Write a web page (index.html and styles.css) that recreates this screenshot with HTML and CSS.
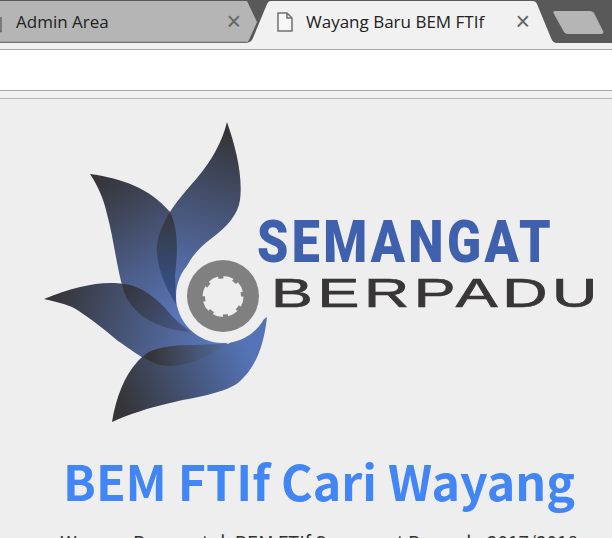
FILE: index.html
```html
<!DOCTYPE html>
<html lang="id">
<head>
    <meta charset="UTF-8">
    <title>Wayang Baru BEM FTIf</title>
    <link rel="stylesheet" href="styles.css">
</head>
<body>
    <div class="tabstrip">
        <svg class="tabshapes" width="612" height="43" viewBox="0 0 612 43">
            <path d="M0 1H247L257 22L248 42H0Z" fill="#b5b5b5"/>
            <path d="M0 42H248" stroke="#8b8b8b" fill="none"/>
            <path d="M1 17V31.5H0" stroke="#666" stroke-width="1.5" fill="none"/>
            <path d="M247 43C251 42 252 40 253 38L267 4C268 2 269 1 271 1H532C535 1 536 2 537 4L551 38C552 41 554 43 557 43Z" fill="#f1f1f1"/>
            <path d="M555 11H590C592 11 593 12 594 13L603 31C604 33 603 34 601 34H568C566 34 565 33 564 32L554 14C553 12 553 11 555 11Z" fill="#b5b5b5"/>
        </svg>
        <div class="tab tab-back">
            <span class="tab-title">Admin Area</span>
            <span class="tab-close">×</span>
        </div>
        <div class="tab tab-active">
            <svg class="tab-icon" width="16" height="20" viewBox="0 0 16 20">
                <path d="M1 1H10L15 6V19H1Z M10 1V6H15" fill="#f8f8f8" stroke="#707070" stroke-width="1.5"/>
            </svg>
            <span class="tab-title">Wayang Baru BEM FTIf</span>
            <span class="tab-close">×</span>
        </div>
    </div>
    <div class="toolbar"></div>
    <div class="addressbar"></div>
    <div class="bookmarks"></div>

    <div class="page">
        <svg class="logo" width="612" height="330" viewBox="0 99 612 330">
            <defs>
                <linearGradient id="leafA" gradientUnits="userSpaceOnUse" x1="227" y1="130" x2="180" y2="300">
                    <stop offset="0" stop-color="#353436"/>
                    <stop offset="1" stop-color="#5a78bd"/>
                </linearGradient>
                <linearGradient id="leafB" gradientUnits="userSpaceOnUse" x1="95" y1="178" x2="180" y2="320">
                    <stop offset="0" stop-color="#353436"/>
                    <stop offset="1" stop-color="#5a78bd"/>
                </linearGradient>
                <linearGradient id="leafC" gradientUnits="userSpaceOnUse" x1="50" y1="295" x2="215" y2="345">
                    <stop offset="0" stop-color="#353436"/>
                    <stop offset="1" stop-color="#5a78bd"/>
                </linearGradient>
                <linearGradient id="leafD" gradientUnits="userSpaceOnUse" x1="120" y1="405" x2="250" y2="350">
                    <stop offset="0" stop-color="#353436"/>
                    <stop offset="1" stop-color="#5574b8"/>
                </linearGradient>
                <linearGradient id="lensA" gradientUnits="userSpaceOnUse" x1="170" y1="215" x2="172" y2="300">
                    <stop offset="0" stop-color="#37393f"/>
                    <stop offset="1" stop-color="#34528f"/>
                </linearGradient>
                <linearGradient id="lensB" gradientUnits="userSpaceOnUse" x1="125" y1="290" x2="190" y2="332">
                    <stop offset="0" stop-color="#35373f"/>
                    <stop offset="1" stop-color="#46598a"/>
                </linearGradient>
                <linearGradient id="lensC" gradientUnits="userSpaceOnUse" x1="150" y1="355" x2="225" y2="345">
                    <stop offset="0" stop-color="#353538"/>
                    <stop offset="1" stop-color="#52699c"/>
                </linearGradient>
            </defs>
            <path d="M227 122C222 142 212 160 197 178C185 192 176 202 170 212C160 228 156 242 157 252C158 272 168 292 177 306L200 300L182 280C186 262 198 248 212 238C228 226 238 214 240 200C243 176 236 148 227 122Z" fill="url(#leafA)"/>
            <path d="M90 174C120 178 150 188 170 212C178 228 178 250 175 275L176 304L195 335C165 332 135 320 124 292C117 270 114 240 107 214C104 200 98 186 90 174Z" fill="url(#leafB)"/>
            <path d="M44 299C70 288 95 282 115 283C135 284 150 292 165 308C173 318 182 326 195 333L228 343C210 355 190 366 170 366C150 366 135 352 118 341C100 326 85 314 72 307C62 303 52 301 44 299Z" fill="url(#leafC)"/>
            <path d="M112 422C116 398 124 376 138 361C150 348 170 345 195 345L228 344L267 317C264 345 256 368 238 383C222 394 195 397 170 403C148 408 130 414 112 422Z" fill="url(#leafD)"/>
            <path d="M170 212C178 228 178 250 175 275L176 304C168 292 158 272 157 252C156 242 160 228 170 212Z" fill="url(#lensA)"/>
            <path d="M122 284C135 284 150 292 165 308C173 318 182 326 190 332C165 330 135 320 124 292Z" fill="url(#lensB)"/>
            <path d="M143 357C150 348 170 345 195 345L228 344C210 355 190 366 170 366C160 366 150 362 143 357Z" fill="url(#lensC)"/>
            <circle cx="223" cy="296" r="47" fill="#eeeeee"/>
            <circle cx="223" cy="296" r="36" fill="#808080"/>
            <circle cx="223" cy="296.5" r="18" fill="#eeeeee"/>
            <circle cx="223" cy="296.5" r="18.5" fill="none" stroke="#eeeeee" stroke-width="4" stroke-dasharray="9.5 5"/>
            <text class="logo-top" x="257" y="261.5" textLength="297" lengthAdjust="spacingAndGlyphs">SEMANGAT</text>
            <text class="logo-bottom" x="271" y="307" textLength="331" lengthAdjust="spacingAndGlyphs">BERPADU</text>
        </svg>
        <h1 class="title">BEM FTIf Cari Wayang</h1>
        <p class="subtitle">Wayang Baru untuk BEM FTIf Semangat Berpadu 2017/2018</p>
    </div>
</body>
</html>
```

FILE: styles.css
```css
html, body {
    margin: 0;
    padding: 0;
    height: 100%;
    overflow: hidden;
}
body {
    background-color: #eeeeee;
    font-family: "Open Sans", Arial, sans-serif;
}
.tabstrip {
    position: relative;
    display: flex;
    height: 43px;
    background-color: #595959;
    color: #222;
}
.tabshapes {
    position: absolute;
    top: 0;
    left: 0;
}
.tab {
    position: relative;
    display: flex;
    align-items: center;
    height: 43px;
    box-sizing: border-box;
    font-size: 17px;
}
.tab-back {
    width: 247px;
    padding: 0 6px 0 16px;
}
.tab-active {
    flex: 1;
    padding: 0 82px 0 30px;
}
.tab-icon {
    margin-right: 13px;
}
.tab-close {
    margin-left: auto;
    font-family: "Liberation Sans", Arial, sans-serif;
    font-size: 25px;
    line-height: 1;
    color: #666;
}
.toolbar {
    height: 6px;
    background-color: #f1f1f1;
    border-bottom: 1px solid #a9a9a9;
}
.addressbar {
    height: 40px;
    background-color: #ffffff;
    border-bottom: 1px solid #a9a9a9;
}
.bookmarks {
    height: 7px;
    background-color: #f1f1f1;
    border-bottom: 1px solid #b5b5b5;
}
.page {
    text-align: center;
}
.logo {
    display: block;
}
.logo-top {
    font-family: Roboto, "Liberation Sans", Arial, sans-serif;
    font-weight: 900;
    font-size: 60px;
    letter-spacing: 4px;
    fill: #3e60ad;
}
.logo-bottom {
    font-family: "Liberation Sans", Arial, sans-serif;
    font-size: 40px;
    letter-spacing: 3px;
    fill: #383636;
    stroke: #383636;
    stroke-width: 0.7px;
}
.title {
    margin: 16px 0 0 26px;
    font-family: "Noto Sans CJK JP", "Noto Sans", sans-serif;
    font-weight: bold;
    font-size: 48.3px;
    line-height: 70px;
    color: #4285f4;
    white-space: nowrap;
}
.subtitle {
    margin: 15px 0 0 26px;
    font-family: "Noto Sans CJK JP", "Noto Sans", sans-serif;
    font-size: 18.8px;
    line-height: 24px;
    color: #333;
    white-space: nowrap;
}
```
